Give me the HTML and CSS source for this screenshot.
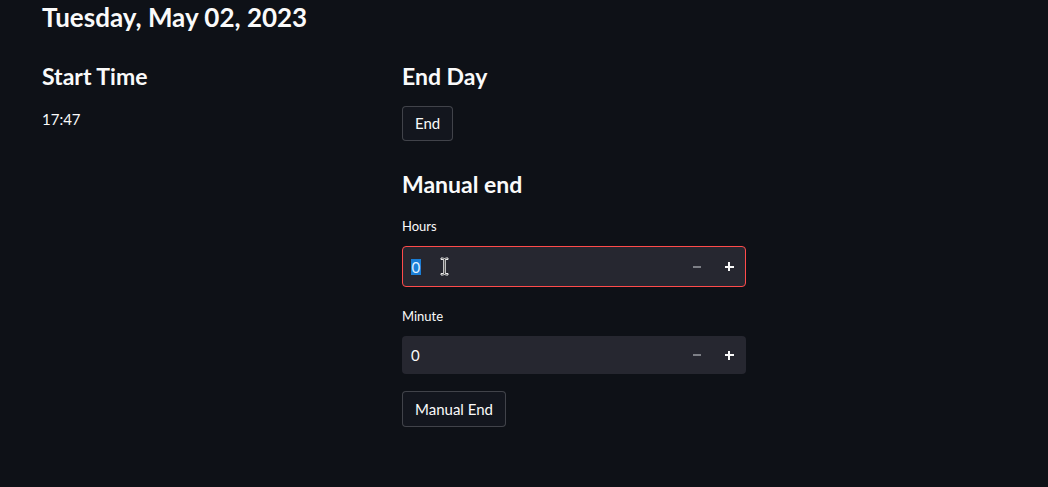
FILE: index.html
```html
<!DOCTYPE html>
<html>
<head>
<meta charset="utf-8">
<link rel="stylesheet" href="styles.css">
</head>
<body>
<main class="main">
  <h1 class="title">Tuesday, May 02, 2023</h1>
  <div class="columns">
    <section class="col">
      <h3 class="sub">Start Time</h3>
      <p class="text">17:47</p>
    </section>
    <section class="col">
      <h3 class="sub">End Day</h3>
      <button class="btn">End</button>
      <h3 class="sub sub-manual">Manual end</h3>
      <label class="label">Hours</label>
      <div class="num num-focus">
        <div class="num-value"><span class="sel">0</span></div>
        <button class="step step-minus"><span class="minus"></span></button>
        <button class="step step-plus"><span class="plus"></span></button>
        <svg class="ibeam" width="9" height="19" viewBox="0 0 9 19">
          <path d="M1 1h2.5l1 1 1-1H8v1.5H5.3v14H8V18H5.5l-1-1-1 1H1v-1.5h2.7v-14H1z" fill="#111" stroke="#fff" stroke-width="0.9"/>
        </svg>
      </div>
      <label class="label label-minute">Minute</label>
      <div class="num">
        <div class="num-value">0</div>
        <button class="step step-minus"><span class="minus"></span></button>
        <button class="step step-plus"><span class="plus"></span></button>
      </div>
      <button class="btn btn-manual">Manual End</button>
    </section>
  </div>
</main>
</body>
</html>
```

FILE: styles.css
```css
* { box-sizing: border-box; }
html, body {
  margin: 0;
  padding: 0;
  background: #0e1117;
  color: #fafafa;
  font-family: "Lato", "Noto Sans", sans-serif;
}
.main {
  width: 704px;
  margin-left: 42px;
}
.title {
  margin: 0;
  font-size: 26px;
  font-weight: 700;
  line-height: 34px;
  padding-top: 0;
}
.columns {
  display: flex;
  gap: 16px;
  margin-top: 26px;
}
.col {
  width: 344px;
  display: flex;
  flex-direction: column;
  align-items: flex-start;
}
.sub {
  margin: 0;
  font-size: 23px;
  font-weight: 700;
  line-height: 32px;
}
.sub-manual {
  margin-top: 27px;
}
.text {
  margin: 15px 0 0;
  font-size: 15px;
  line-height: 24px;
}
.btn {
  font-family: inherit;
  font-size: 15px;
  color: #fafafa;
  background: #13161e;
  border: 1px solid rgba(250, 250, 250, 0.2);
  border-radius: 4px;
  padding: 0 12px;
  height: 35px;
  line-height: 33px;
  margin-top: 14px;
  cursor: pointer;
}
.btn-manual {
  margin-top: 17px;
  height: 36px;
}
.label {
  font-size: 13px;
  line-height: 20px;
  margin-top: 16px;
  color: #fafafa;
}
.label-minute {
  margin-top: 19px;
}
.num {
  position: relative;
  width: 344px;
  height: 38px;
  margin-top: 10px;
  background: #262730;
  border-radius: 4px;
  display: flex;
  align-items: center;
}
.num-focus {
  height: 41px;
  border: 1px solid #ff4b4b;
  margin-top: 10px;
}
.num-value {
  flex: 1;
  padding-left: 9px;
  font-size: 15px;
  line-height: 20px;
}
.num-focus .num-value {
  padding-left: 8px;
}
.sel {
  background: #1a7ed6;
  color: #dff0ff;
  display: inline-block;
  line-height: 16px;
  padding: 0 0.5px;
}
.step {
  width: 32px;
  height: 100%;
  background: transparent;
  border: none;
  padding: 0;
  display: flex;
  align-items: center;
  justify-content: center;
}
.step-plus { margin-right: 1px; }
.num-focus .step-plus { margin-right: 0; }
.minus {
  width: 8px;
  height: 2px;
  background: #7d7f86;
}
.plus {
  position: relative;
  width: 9px;
  height: 9px;
}
.plus::before, .plus::after {
  content: "";
  position: absolute;
  background: #fafafa;
}
.plus::before { left: 0; top: 3.5px; width: 9px; height: 2px; }
.plus::after { left: 3.5px; top: 0; width: 2px; height: 9px; }
.ibeam {
  position: absolute;
  left: 37px;
  top: 10px;
}
```
